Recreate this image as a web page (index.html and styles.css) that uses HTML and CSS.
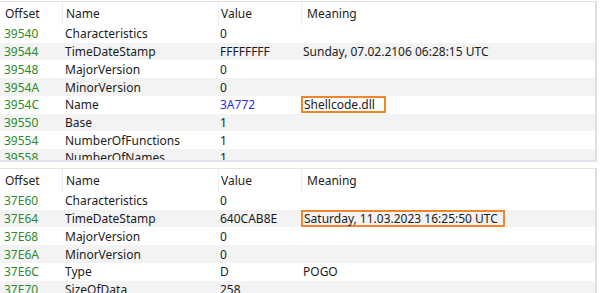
FILE: index.html
```html
<!DOCTYPE html>
<html>
<head>
<meta charset="utf-8">
<link rel="stylesheet" href="styles.css">
</head>
<body>
<div class="panel panel-top">
  <div class="row head">
    <div class="c off">Offset</div><div class="c nm sep">Name</div><div class="c val sep">Value</div><div class="c mean sep">Meaning</div>
  </div>
  <div class="row"><div class="c off">39540</div><div class="c nm">Characteristics</div><div class="c val">0</div><div class="c mean"></div></div>
  <div class="row alt"><div class="c off">39544</div><div class="c nm">TimeDateStamp</div><div class="c val">FFFFFFFF</div><div class="c mean">Sunday, 07.02.2106 06:28:15 UTC</div></div>
  <div class="row"><div class="c off">39548</div><div class="c nm">MajorVersion</div><div class="c val">0</div><div class="c mean"></div></div>
  <div class="row alt"><div class="c off">3954A</div><div class="c nm">MinorVersion</div><div class="c val">0</div><div class="c mean"></div></div>
  <div class="row"><div class="c off">3954C</div><div class="c nm">Name</div><div class="c val link">3A772</div><div class="c mean"><span class="hl hl-dll">Shellcode.dll</span></div></div>
  <div class="row alt"><div class="c off">39550</div><div class="c nm">Base</div><div class="c val">1</div><div class="c mean"></div></div>
  <div class="row"><div class="c off">39554</div><div class="c nm">NumberOfFunctions</div><div class="c val">1</div><div class="c mean"></div></div>
  <div class="row alt"><div class="c off">39558</div><div class="c nm">NumberOfNames</div><div class="c val">1</div><div class="c mean"></div></div>
</div>
<div class="panel panel-bottom">
  <div class="row head">
    <div class="c off">Offset</div><div class="c nm sep">Name</div><div class="c val sep">Value</div><div class="c mean sep">Meaning</div>
  </div>
  <div class="row"><div class="c off">37E60</div><div class="c nm">Characteristics</div><div class="c val">0</div><div class="c mean"></div></div>
  <div class="row alt"><div class="c off">37E64</div><div class="c nm">TimeDateStamp</div><div class="c val">640CAB8E</div><div class="c mean"><span class="hl hl-date">Saturday, 11.03.2023 16:25:50 UTC</span></div></div>
  <div class="row"><div class="c off">37E68</div><div class="c nm">MajorVersion</div><div class="c val">0</div><div class="c mean"></div></div>
  <div class="row alt"><div class="c off">37E6A</div><div class="c nm">MinorVersion</div><div class="c val">0</div><div class="c mean"></div></div>
  <div class="row"><div class="c off">37E6C</div><div class="c nm">Type</div><div class="c val">D</div><div class="c mean">POGO</div></div>
  <div class="row alt"><div class="c off">37E70</div><div class="c nm">SizeOfData</div><div class="c val">258</div><div class="c mean"></div></div>
</div>
</body>
</html>
```
FILE: styles.css
```css
html, body {
  margin: 0;
  padding: 0;
  background: #ffffff;
}
body {
  width: 600px;
  height: 293px;
  overflow: hidden;
  font-family: "Noto Sans", "Open Sans", sans-serif;
  font-size: 12px;
  color: #1c1c1c;
}
.panel {
  width: 597px;
  overflow: hidden;
  border-top: 1px solid #e2e2e8;
  border-right: 2px solid #dedfe6;
  border-bottom: 2px solid #e2e3ea;
  box-sizing: border-box;
  background: #fff;
}
.panel-top {
  margin-top: 1px;
  height: 161px;
}
.panel-bottom {
  margin-top: 6px;
  height: 126px;
  border-bottom: none;
}
.row {
  display: grid;
  grid-template-columns: 62px 156px 83px 1fr;
  height: 17.72px;
  align-items: center;
}
.row.alt {
  background: #f3f3f3;
}
.row.head {
  height: 23px;
  align-items: stretch;
  background: #fff;
}
.c {
  white-space: nowrap;
  overflow: visible;
  line-height: 17px;
}
.head .c {
  display: flex;
  align-items: center;
  color: #1e1e1e;
}
.head .sep {
  border-left: 1px solid #ececec;
}
.off { padding-left: 4px; color: #2b8c2b; }
.head .off { padding-left: 5px; color: #1e1e1e; }
.nm { padding-left: 3px; }
.val { padding-left: 2px; }
.mean { padding-left: 2px; }
.head .mean { padding-left: 5px; }
.link { color: #2d2de6; }
.hl {
  display: inline-block;
  border: 2px solid #f08530;
  line-height: 13px;
  padding: 0 3px 0 1px;
  margin-left: -2px;
}
.hl-dll { padding-right: 9px; }
.hl-date { padding-right: 5px; }
```
